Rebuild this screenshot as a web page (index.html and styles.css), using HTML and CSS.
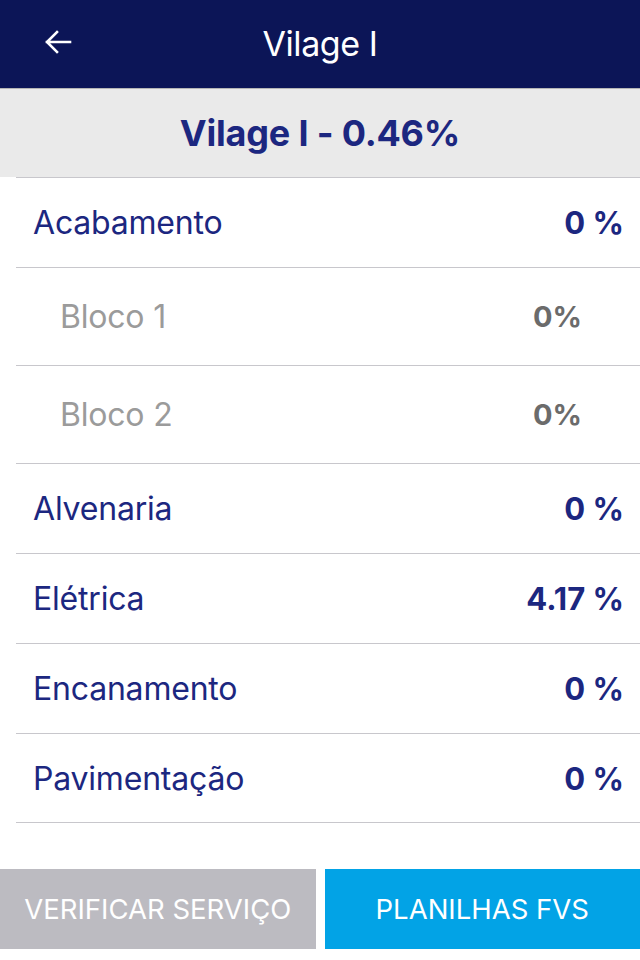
FILE: index.html
```html
<!DOCTYPE html>
<html lang="pt">
<head>
<meta charset="utf-8">
<title>Vilage I</title>
<link rel="stylesheet" href="styles.css">
</head>
<body>
<div class="screen">
  <header class="topbar">
    <button class="back" aria-label="Voltar">
      <svg width="28" height="24" viewBox="0 0 28 24"><path d="M26 12H3M13 2L3 12l10 10" fill="none" stroke="#fff" stroke-width="2.6" stroke-linecap="square"/></svg>
    </button>
    <h1 class="title">Vilage I</h1>
  </header>
  <div class="summary">Vilage I - 0.46%</div>
  <ul class="list">
    <li class="row"><span class="label">Acabamento</span><span class="value">0 %</span></li>
    <li class="row sub"><span class="label">Bloco 1</span><span class="value">0%</span></li>
    <li class="row sub"><span class="label">Bloco 2</span><span class="value">0%</span></li>
    <li class="row"><span class="label">Alvenaria</span><span class="value">0 %</span></li>
    <li class="row"><span class="label">Elétrica</span><span class="value">4.17 %</span></li>
    <li class="row"><span class="label">Encanamento</span><span class="value">0 %</span></li>
    <li class="row"><span class="label">Pavimentação</span><span class="value">0 %</span></li>
  </ul>
  <div class="actions">
    <button class="btn btn-grey">VERIFICAR SERVIÇO</button>
    <button class="btn btn-blue">PLANILHAS FVS</button>
  </div>
</div>
</body>
</html>
```
FILE: styles.css
```css
* { box-sizing: border-box; }
html, body { margin: 0; padding: 0; background: #fff; }
body { font-family: Inter, "Noto Sans", sans-serif; }
.screen { width: 640px; height: 960px; display: flex; flex-direction: column; }
.topbar {
  height: 89px;
  background: #0c1557;
  border-bottom: 1px solid #b5b5b5;
  display: flex; align-items: center; justify-content: center;
  position: relative;
  padding-bottom: 2px;
}
.back {
  position: absolute; left: 44px; top: 30px;
  background: none; border: 0; padding: 0; width: 28px; height: 24px;
}
.back svg { display: block; }
.title { margin: 0; color: #fff; font-weight: 400; font-size: 34px; letter-spacing: -0.4px; }
.summary {
  height: 88px;
  background: #eaeaea;
  display: flex; align-items: center; justify-content: center;
  color: #1c2780; font-weight: 700; font-size: 36px; letter-spacing: -0.2px;
}
.list { list-style: none; margin: 0; padding: 0; }
.row {
  margin-left: 16px;
  height: 90px;
  border-top: 1px solid #c8c7cc;
  display: flex; align-items: center; justify-content: space-between;
  padding: 0 16px 0 17px;
  color: #1c2780; font-size: 32px;
}
.row:last-child { border-bottom: 1px solid #c8c7cc; }
.row .label { letter-spacing: -0.2px; }
.row .value { font-weight: 700; font-size: 31px; letter-spacing: 0; }
.row.sub { height: 98px; padding: 0 58px 0 44px; }
.row.sub .label { color: #9b9b9b; font-size: 32px; }
.row.sub .value { color: #6b6b6b; font-size: 29px; }
.actions {
  margin-top: 46px;
  display: flex; gap: 9px; height: 80px;
}
.btn {
  flex: 1; border: 0; margin: 0; padding: 0;
  color: #fff; font-family: Inter, "Noto Sans", sans-serif; font-size: 27.5px; letter-spacing: 0;
}
.btn-grey { background: #bcbbc1; }
.btn-blue { background: #02a3e6; }
```
